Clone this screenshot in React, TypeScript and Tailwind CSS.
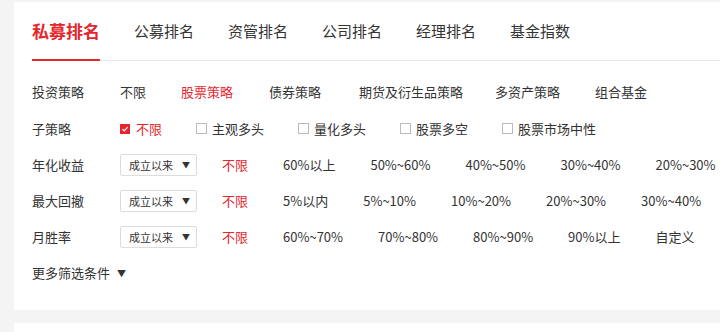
import React from "react";

const RED = "text-[#e4262d]";

function Row({ label, children, h }: { label: string; children: React.ReactNode; h: string }) {
  return (
    <div className={`flex items-center ${h}`}>
      <div className="w-[88px] shrink-0 text-[13px] text-[#333]">{label}</div>
      {children}
    </div>
  );
}

function Select() {
  return (
    <div className="flex h-[22px] w-[77px] shrink-0 items-center rounded-[2px] border border-[#dcdcdc] bg-white pl-[8px] text-[11px] text-[#333]">
      <span>成立以来</span>
      <span className="ml-[9px] text-[8px] leading-none text-[#333]">▼</span>
    </div>
  );
}

function Box({ checked }: { checked?: boolean }) {
  if (checked) {
    return (
      <span className="flex h-[10px] w-[10px] items-center justify-center bg-[#e4262d]">
        <svg width="8" height="8" viewBox="0 0 8 8">
          <path d="M1.5 4.2 L3.3 5.8 L6.6 2.2" stroke="white" strokeWidth="1.2" fill="none" />
        </svg>
      </span>
    );
  }
  return <span className="h-[11px] w-[11px] border border-[#bbb] bg-white" />;
}

export default function App() {
  const tabs = ["公募排名", "资管排名", "公司排名", "经理排名", "基金指数"];
  const subs = ["主观多头", "量化多头", "股票多空", "股票市场中性"];
  const r3 = ["60%以上", "50%~60%", "40%~50%", "30%~40%", "20%~30%"];
  const r4 = ["5%以内", "5%~10%", "10%~20%", "20%~30%", "30%~40%"];
  const r5 = ["60%~70%", "70%~80%", "80%~90%", "90%以上", "自定义"];
  return (
    <div
      className="h-[332px] w-[720px] overflow-hidden bg-[#f4f4f4] pl-[14px] pt-[2px]"
      style={{ fontFamily: '"Noto Sans CJK SC", "Noto Sans", sans-serif' }}
    >
      <div className="h-[308px] w-[720px] bg-white pl-[18px]">
        <div className="flex h-[59px] items-center border-b border-[#e6e6e6]">
          <div className="relative flex h-full items-center">
            <span className={`text-[17px] font-bold ${RED}`}>私募排名</span>
            <span className="absolute bottom-[-1px] left-0 h-[2px] w-full bg-[#e4262d]" />
          </div>
          {tabs.map((t) => (
            <span key={t} className="ml-[34px] text-[15px] text-[#333]">
              {t}
            </span>
          ))}
        </div>
        <div className="pt-[12px]">
          <Row label="投资策略" h="h-[37px]">
            <div className="flex items-center gap-[35px] text-[13px] text-[#333]">
              <span>不限</span>
              <span className={RED}>股票策略</span>
              <span className="ml-[1px]">债券策略</span>
              <span className="ml-[3px]">期货及衍生品策略</span>
              <span className="-ml-[3px]">多资产策略</span>
              <span>组合基金</span>
            </div>
          </Row>
          <Row label="子策略" h="h-[37px]">
            <div className="flex items-center gap-[34px] text-[13px] text-[#333]">
              <span className="flex items-center gap-[6px]">
                <Box checked />
                <span className={RED}>不限</span>
              </span>
              {subs.map((s) => (
                <span key={s} className="flex items-center gap-[5px]">
                  <Box />
                  <span>{s}</span>
                </span>
              ))}
            </div>
          </Row>
          {[
            { l: "年化收益", v: r3 },
            { l: "最大回撤", v: r4 },
            { l: "月胜率", v: r5 },
          ].map((r) => (
            <Row key={r.l} label={r.l} h="h-[36px]">
              <Select />
              <div className="ml-[25px] flex items-center gap-[35px] whitespace-nowrap text-[13px] text-[#333]">
                <span className={RED}>不限</span>
                {r.v.map((v) => (
                  <span key={v}>{v}</span>
                ))}
              </div>
            </Row>
          ))}
          <div className="flex h-[36px] items-center text-[13px] text-[#333]">
            <span>更多筛选条件</span>
            <span className="ml-[7px] text-[9px] leading-none">▼</span>
          </div>
        </div>
      </div>
      <div className="mt-[13px] h-[40px] w-[720px] bg-white" />
    </div>
  );
}
